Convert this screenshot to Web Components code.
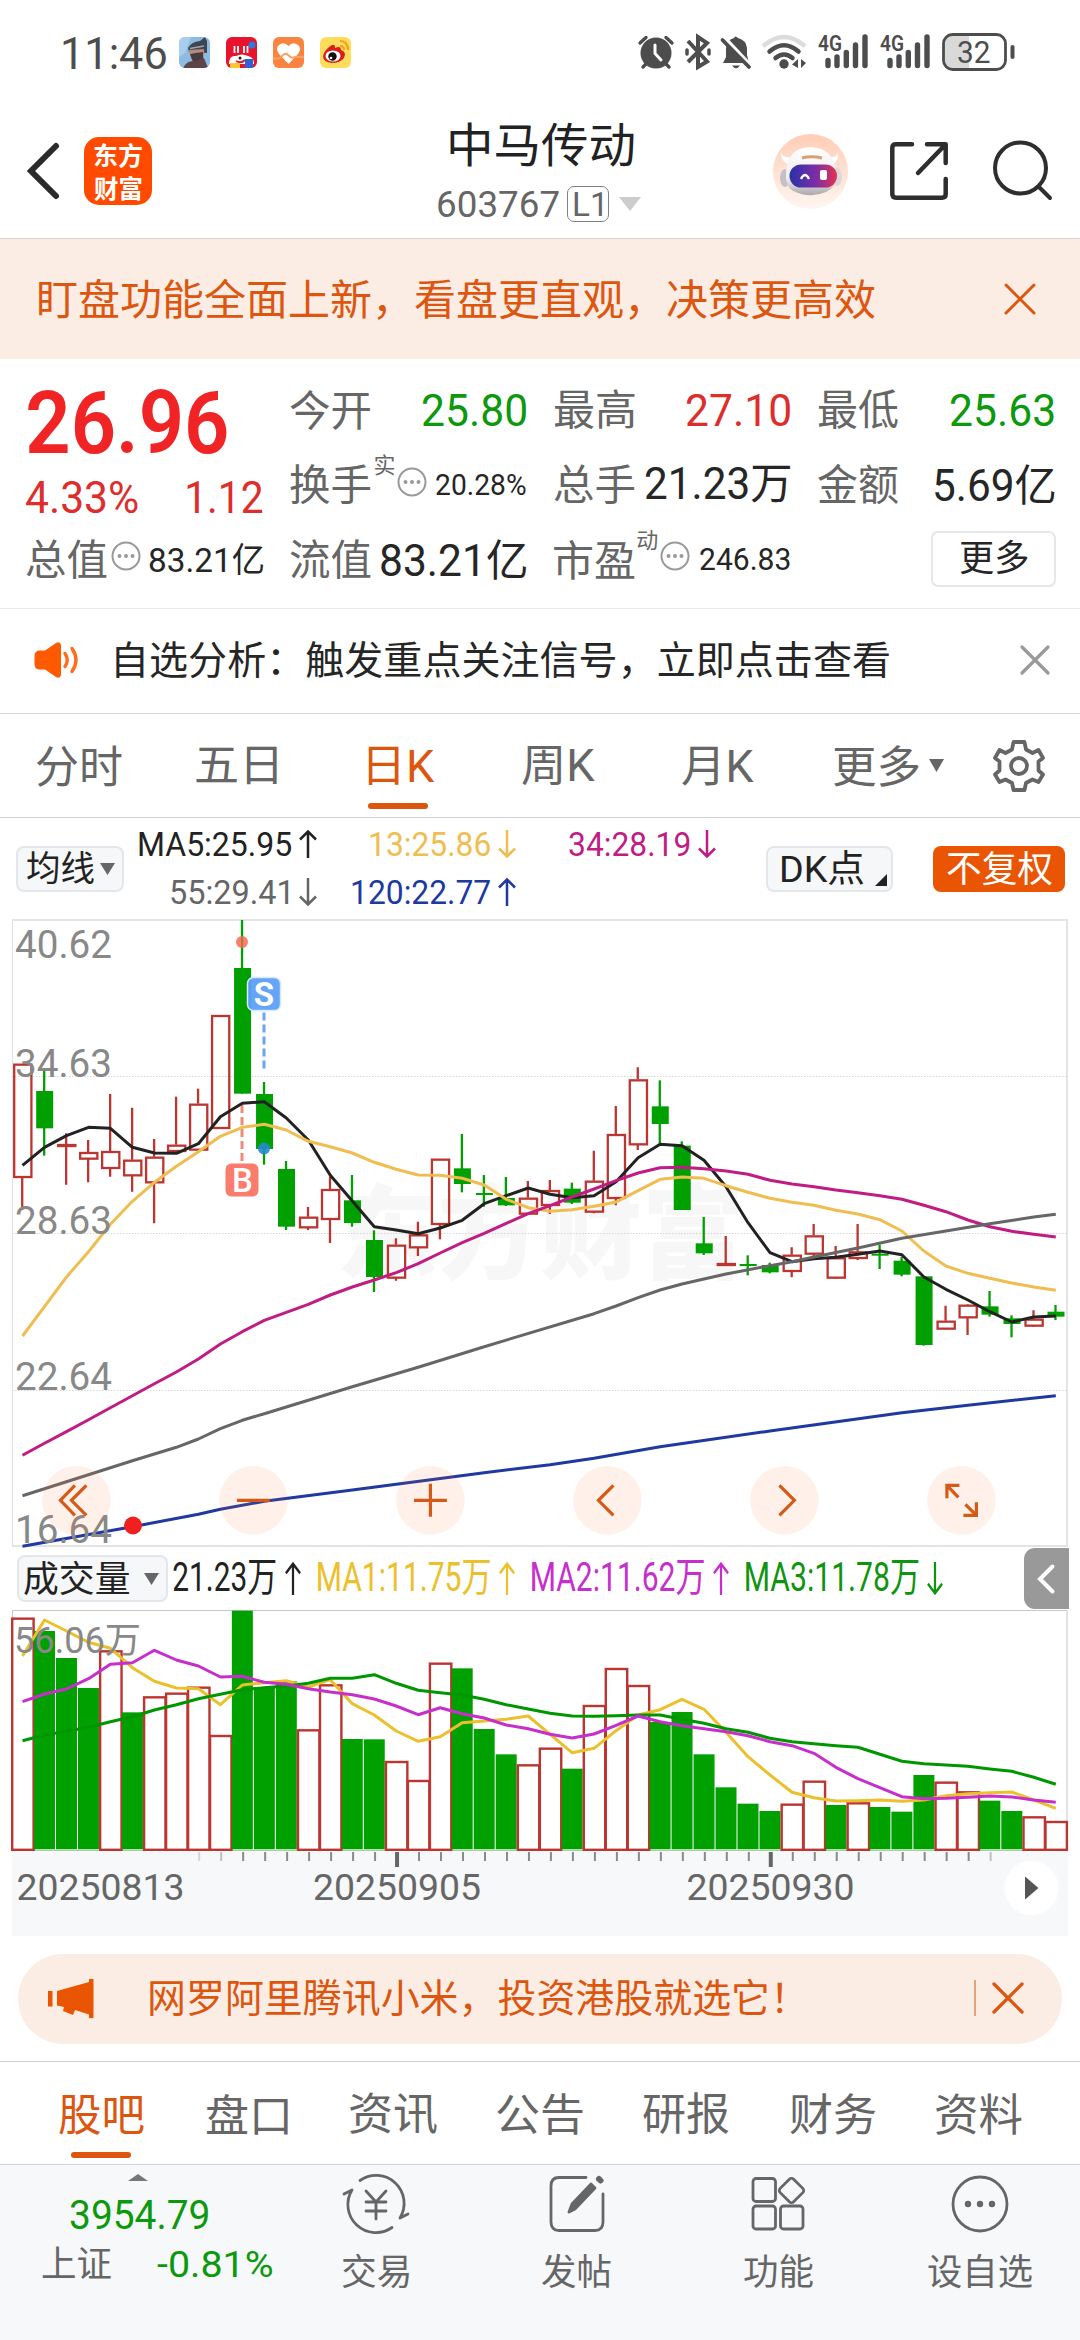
<!DOCTYPE html>
<html lang="zh-CN">
<head>
<meta charset="utf-8">
<title>中马传动 603767</title>
<style>
html,body{margin:0;padding:0;background:#fff}
body{width:1080px;height:2340px;overflow:hidden;font-family:Roboto,"Noto Sans CJK SC",sans-serif}
</style>
</head>
<body>
<stock-page></stock-page>
<script>
const FONT = 'Roboto,"Noto Sans CJK SC",sans-serif';
const ctx = document.createElement('canvas').getContext('2d');

/* Text whose box is its ink: w = ink width, s = font size, c = colour, b = weight, ml = left margin, dy = vertical nudge */
customElements.define('fit-text', class extends HTMLElement {
  connectedCallback() {
    if (this.shadowRoot) return;
    const a = (n, d) => this.hasAttribute(n) ? this.getAttribute(n) : d;
    const s = +a('s', 40), b = a('b', '400'), t = this.textContent;
    ctx.font = `${b} ${s}px ${FONT}`;
    const m = ctx.measureText(t);
    const ink = m.actualBoundingBoxLeft + m.actualBoundingBoxRight;
    const w = +a('w', ink), k = w / ink;
    const asc = m.actualBoundingBoxAscent, h = asc + m.actualBoundingBoxDescent;
    const base = h / 2 + (m.fontBoundingBoxAscent - m.fontBoundingBoxDescent) / 2;
    const dx = m.actualBoundingBoxLeft * k, dy = asc - base + +a('dy', 0);
    this.attachShadow({mode: 'open'}).innerHTML = `<style>
      :host{display:block;flex:none;width:${w}px;height:${h}px;margin-left:${a('ml', 0)};color:${a('c', 'inherit')}}
      span{display:block;width:max-content;white-space:nowrap;font:${b} ${s}px/${h}px ${FONT};transform-origin:0 50%;transform:translate(${dx}px,${dy}px) scaleX(${k})}
    </style><span><slot></slot></span>`;
  }
});

function define(name, css, html) {
  const tpl = document.createElement('template');
  tpl.innerHTML = `<style>:host{display:block;box-sizing:border-box}*{box-sizing:border-box}svg{display:block;flex:none;overflow:visible}.r{display:flex;align-items:center}${css}</style>${html}`;
  customElements.define(name, class extends HTMLElement {
    constructor() { super(); this.attachShadow({mode: 'open'}).append(tpl.content.cloneNode(true)); }
  });
}

const signal = ml => `<svg width="50" height="36" viewBox="0 0 50 36" style="margin-left:${ml}px">
  <g stroke="#4d4d4d" stroke-width="5.4" stroke-linecap="round"><path d="M10 26.500V31.500M19 23V31.500M28.300 18.500V31.500M37.500 11V31.500M47 3V31.500"/></g>
  <text x="0" y="17" font-family="Roboto" font-weight="600" font-size="22.500" textLength="24" lengthAdjust="spacingAndGlyphs" fill="#4d4d4d">4G</text></svg>`;

define('status-bar', `:host{height:104px}.r{height:104px;padding-left:63px}`, `<div class="r">
  <fit-text s="44" w="103" c="#4d4d4d" dy="1">11:46</fit-text>
  <svg width="31" height="31" viewBox="0 0 31 31" style="margin-left:13px"><defs><clipPath id="a"><rect width="31" height="31" rx="6"/></clipPath></defs><g clip-path="url(#a)"><rect width="31" height="31" fill="#8dbbe2"/><path d="M0 0H12L6 16L0 20z" fill="#a9cdec"/><path d="M9 11Q12 5 21 4L26 0 28 4 28 16 10 15z" fill="#3e4751"/><path d="M10 13L25 12 25 20 20 25 12 22z" fill="#b98a78"/><path d="M11 17L17 16L24 15 24 24 14 25z" fill="#443c40"/><path d="M4 31Q8 23 16 24L25 21 29 31z" fill="#5c4448"/><path d="M11 11.500L25 9" stroke="#9aa8b2" stroke-width="1.600"/></g></svg>
  <svg width="31" height="31" viewBox="0 0 31 31" style="margin-left:16px"><defs><clipPath id="b"><rect width="31" height="31" rx="6"/></clipPath></defs><g clip-path="url(#b)"><rect width="31" height="31" fill="#e8142d"/><circle cx="26" cy="8" r="3.500" fill="#2c7be0"/><path d="M3 27Q3 18 10 19Q16 16 22 19Q28 20 28 27z" fill="#fff"/><path d="M10 24Q15 27 19 23" stroke="#e8142d" stroke-width="2" fill="none"/><circle cx="14" cy="21" r="1.500" fill="#222"/><rect x="19" y="22" width="8" height="9" fill="#2c62d8"/><rect x="4" y="26" width="10" height="5" fill="#ffc531"/><path d="M8.500 9V16M12 9V16M18 9V16M21.500 9V16" stroke="#fff" stroke-width="1.800"/></g></svg>
  <svg width="31" height="31" viewBox="0 0 31 31" style="margin-left:16px"><rect width="31" height="31" rx="6" fill="#f98440"/><path d="M15.500 27L6 17Q2 11 6 8Q11 4 15.500 9Q20 4 25 8Q29 11 25 17z" fill="#fff"/><path d="M0 21Q4 23 8 20Q12 15 15 18Q19 22 22 20L31 20" stroke="#f8a164" stroke-width="2" fill="none"/></svg>
  <svg width="31" height="31" viewBox="0 0 31 31" style="margin-left:16px"><rect width="31" height="31" rx="6" fill="#ffdc5c"/><path d="M3 19Q5 12 12 8Q15 7 15 11Q21 8 21 13Q27 15 24 21Q20 26 12 26Q3 25 3 19z" fill="#d81f1c"/><ellipse cx="13" cy="19" rx="7.500" ry="5.500" fill="#fff"/><circle cx="12.500" cy="19.500" r="4.200" fill="#15100e"/><circle cx="11" cy="21" r="1.300" fill="#fff"/><path d="M20 4Q28 4 28 13M20 9Q24 9 24 13" stroke="#f3a21f" stroke-width="2.200" fill="none"/></svg>
  <svg width="36" height="34" viewBox="0 0 36 34" style="margin-left:287px"><g fill="none" stroke="#4d4d4d" stroke-width="3.400" stroke-linecap="round"><path d="M2 8L8 2.500M34 8L28 2.500M5 32L9 28M31 32L27 28"/></g><circle cx="18" cy="18" r="15.500" fill="#4d4d4d"/><path d="M17 10V18.500L23 25" fill="none" stroke="#fff" stroke-width="3" stroke-linecap="round"/></svg>
  <svg width="26" height="34" viewBox="0 0 26 34" style="margin-left:11px"><path d="M3 6L22 26.500L13 32V2L22 8L3 27" fill="none" stroke="#4d4d4d" stroke-width="4"/><path d="M2 15v4M24 15v4" stroke="#4d4d4d" stroke-width="3.500" stroke-linecap="round"/></svg>
  <svg width="30" height="34" viewBox="0 0 30 34" style="margin-left:10px"><path d="M2 28L5 22V14Q5 5 13 3Q14 0 17 3Q25 5 26 13V20L28 28z" fill="#4d4d4d"/><path d="M11 30.500H19Q15 36 11 30.500z" fill="#4d4d4d"/><path d="M3 2L30 31" stroke="#fff" stroke-width="4"/><path d="M1.500 5L28 32" stroke="#4d4d4d" stroke-width="3.800" stroke-linecap="round"/></svg>
  <svg width="44" height="34" viewBox="0 0 44 34" style="margin-left:11px"><g fill="none" stroke-width="4.500" stroke-linecap="round"><path d="M2.500 10Q22-6 41.500 10" stroke="#dcdcdc"/><path d="M7.500 16.500Q22 4 36.500 16.500" stroke="#4d4d4d"/><path d="M13.500 23Q22 16 30.500 23" stroke="#4d4d4d"/></g><circle cx="22" cy="29" r="4.700" fill="#4d4d4d"/><path d="M36 24V33L30 29.500zM39 24L44 28L39 33z" fill="#4d4d4d"/></svg>
  ${signal(12)}${signal(12)}
  <svg width="73" height="38" viewBox="0 0 73 38" style="margin-left:12px"><path d="M9 1.500H27V36.500H9Q2 36 2 28V10Q2 2 9 1.500z" fill="#d9d9d9"/><rect x="1.500" y="1.500" width="62" height="35" rx="9" fill="none" stroke="#4d4d4d" stroke-width="2.800"/><path d="M70.500 14V24" stroke="#4d4d4d" stroke-width="4" stroke-linecap="round"/><text x="15" y="30" font-family="Roboto" font-size="32" textLength="33.500" lengthAdjust="spacingAndGlyphs" fill="#4d4d4d">32</text></svg>
</div>`);

define('nav-bar', `:host{height:135px;border-bottom:1px solid #d2d2d2}.r{height:134px}
.logo{width:68px;height:68px;border-radius:15px;background:#ff4a00;margin-left:25px;color:#fff;display:flex;flex-direction:column;align-items:center;justify-content:center;gap:6px}
.title{margin-left:286px;width:206px;display:flex;flex-direction:column;align-items:flex-start;padding-top:2px}
.sub{display:flex;align-items:center;height:36px;margin-top:19px}
.lv{width:42px;height:36px;border:1.500px solid #808080;border-radius:7px;margin-left:8px;display:flex;align-items:center;justify-content:center}`, `<div class="r">
  <svg width="32" height="56" viewBox="0 0 32 56" style="margin-left:27px"><path d="M29 3L4 28L29 53" fill="none" stroke="#2b2b2b" stroke-width="6" stroke-linecap="round"/></svg>
  <div class="logo"><fit-text s="25" w="48" b="700">东方</fit-text><fit-text s="25" w="48" b="700">财富</fit-text></div>
  <div class="title"><fit-text s="47" w="184" ml="12px" c="#222">中马传动</fit-text>
    <div class="sub"><fit-text s="37.500" w="121" c="#666">603767</fit-text><div class="lv"><fit-text s="33" w="28" c="#666">L1</fit-text></div>
    <svg width="22" height="14" viewBox="0 0 22 14" style="margin-left:10px"><path d="M0 0H22L11 14z" fill="#ccc"/></svg></div></div>
  <svg width="75" height="75" viewBox="0 0 75 75" style="margin-left:129px"><defs><linearGradient id="bg" x2="0" y2="1"><stop stop-color="#ffcdb5"/><stop offset="1" stop-color="#fff6f1"/></linearGradient><linearGradient id="vz"><stop stop-color="#2931a5"/><stop offset=".55" stop-color="#7a2ea8"/><stop offset="1" stop-color="#e5324e"/></linearGradient><linearGradient id="hd" x2="0" y2="1"><stop stop-color="#fff"/><stop offset=".65" stop-color="#f0edf0"/><stop offset="1" stop-color="#aaa7ad"/></linearGradient></defs>
    <circle cx="37.500" cy="37.500" r="37.500" fill="url(#bg)"/><path d="M8 17Q8 24 17 23L15 30Q7 27 8 17zM64 17Q65 24 57 23L60 30Q67 26 64 17z" fill="#fff"/><ellipse cx="12" cy="44" rx="5" ry="9" fill="#c4c2c8"/><ellipse cx="64" cy="43" rx="5" ry="9" fill="#ddd8dc"/><path d="M13 40Q14 13 38 13Q61 14 63 39Q64 53 53 58Q37 65 20 57Q12 52 13 40z" fill="url(#hd)"/><path d="M29 24Q38 21.500 49 24" stroke="#d9a06f" stroke-width="3" fill="none"/><rect x="16.500" y="30.500" width="47.500" height="23" rx="11.500" fill="url(#vz)"/><path d="M28 45Q32 37 36 45" stroke="#fff" stroke-width="2.300" fill="none"/><rect x="47" y="36" width="7" height="10" rx="2" fill="#fff"/></svg>
  <svg width="58" height="58" viewBox="0 0 58 58" style="margin-left:42px"><g fill="none" stroke="#2e2e2e" stroke-width="4.500" stroke-linecap="round" stroke-linejoin="round"><path d="M22 2.300H6Q2.300 2.300 2.300 6V51.700Q2.300 55.700 6 55.700H52Q55.700 55.700 55.700 52V37"/><path d="M37 2.300H55.700V21M55 3L28 31"/></g></svg>
  <svg width="60" height="60" viewBox="0 0 60 60" style="margin-left:45px"><g fill="none" stroke="#2e2e2e" stroke-width="4" stroke-linecap="round"><circle cx="27.500" cy="27" r="25.500"/><path d="M46 46L57 57"/></g></svg>
</div>`);

define('alert-banner', `:host{height:120px;background:#fcede4}.r{height:120px;padding-left:39px}`, `<div class="r">
  <fit-text s="42" w="836" c="#dc5610">盯盘功能全面上新，看盘更直观，决策更高效</fit-text>
  <svg width="32" height="32" viewBox="0 0 32 32" style="margin-left:129px"><path d="M2 2L30 30M30 2L2 30" stroke="#dc5610" stroke-width="3" stroke-linecap="round"/></svg></div>`);

const dots = (ml, c='') => `<svg width="30" height="30" viewBox="0 0 30 30" style="margin-left:${ml}px;${c}"><circle cx="15" cy="15" r="13.500" fill="none" stroke="#999" stroke-width="2"/><g fill="#999"><circle cx="8.500" cy="15" r="2"/><circle cx="15" cy="15" r="2"/><circle cx="21.500" cy="15" r="2"/></g></svg>`;
const cell = (label, mid, value) => `<div class="r cell"><fit-text s="41.500" w="80.500" c="#666">${label}</fit-text>${mid}${value}</div>`;
const val = (t, s, w, c='#262626', dy=0) => `<fit-text ml="auto" s="${s}" w="${w}" c="${c}" dy="${dy}">${t}</fit-text>`;
define('quote-panel', `:host{height:250px;border-bottom:1px solid #ebebeb}
.g{display:grid;grid-template-columns:repeat(4,236.500px);column-gap:27.400px;grid-auto-rows:75px;padding:12.500px 0 0 26px}
.cell{height:75px}.between{justify-content:space-between}
.more{width:125px;height:56px;margin-left:auto;border:2px solid #e6e6e9;border-radius:7px;display:flex;align-items:center;justify-content:center;position:relative;right:-2px}`, `<div class="g">
  <div class="r cell"><fit-text s="87" w="199" ml="1.500px" b="600" c="#f02424" dy="12">26.96</fit-text></div>
  ${cell('今开','',val('25.80',45,103,'#0d990d',1))}${cell('最高','',val('27.10',45,103,'#dd2d2d',1))}${cell('最低','',val('25.63',45,103,'#0d990d',1))}
  <div class="r cell between"><fit-text s="44" w="112" c="#dd2d2d" dy="13">4.33%</fit-text><fit-text s="44" w="76" c="#dd2d2d" dy="13">1.12</fit-text></div>
  ${cell('换手','<fit-text s="22" w="20" ml="4px" c="#666" dy="-19">实</fit-text>'+dots(3,'margin-top:-5px'),val('20.28%',29.5,90,'#262626',0))}
  ${cell('总手','',val('21.23万',43.5,144))}${cell('金额','',val('5.69亿',43.5,119.5))}
  ${cell('总值',dots(4,'margin-top:-7px'),val('83.21亿',34,114))}${cell('流值','',val('83.21亿',43.5,145))}
  ${cell('市盈','<fit-text s="22" w="20" ml="3px" c="#666" dy="-19">动</fit-text>'+dots(3,'margin-top:-7px'),val('246.83',31,90,'#262626',0))}
  <div class="r cell"><div class="more"><fit-text s="36" w="67.500" c="#262626" dy="-2">更多</fit-text></div></div>
</div>`);

define('signal-notice', `:host{height:105px;border-bottom:1px solid #d6d6d6}.r{height:102px;padding-left:34px}`, `<div class="r">
  <svg width="44" height="36" viewBox="0 0 44 36"><path d="M6 8.500H11L22 1Q26-1 27 3V33Q26 37 22 35L11 27.500H6Q.5 27.500.5 22V14Q.5 8.500 6 8.500z" fill="#ff5a00"/><g fill="none" stroke="#ff6c1c" stroke-width="3.400" stroke-linecap="round"><path d="M31 11.500Q35.500 18 31 24.500M38 6.500Q46 18 38 29.500"/></g></svg>
  <fit-text s="39" w="773" ml="38px" c="#262626" dy="-1">自选分析：触发重点关注信号，立即点击查看</fit-text>
  <svg width="30" height="30" viewBox="0 0 30 30" style="margin-left:131px"><path d="M2 2L28 28M28 2L2 28" stroke="#999" stroke-width="3.200" stroke-linecap="round"/></svg></div>`);

define('period-tabs', `:host{height:104px;border-bottom:1px solid #d2d2d2;color:#666}.r{height:103px;padding-left:36px}
.on{align-self:stretch;display:flex;flex-direction:column;align-items:flex-start;justify-content:flex-end;color:#dc5610;margin-left:91px}
.on i{width:60px;height:6px;border-radius:3px;background:#dc5610;margin:17px 0 8px}`, `<div class="r">
  <fit-text s="44" w="86">分时</fit-text>
  <fit-text s="44" w="81" ml="74px">五日</fit-text>
  <div class="on"><fit-text s="45" w="67">日K</fit-text><i></i></div>
  <fit-text s="44" w="73" ml="87px">周K</fit-text>
  <fit-text s="44" w="72" ml="87px">月K</fit-text>
  <fit-text s="44" w="85" ml="80px">更多</fit-text>
  <svg width="15" height="13" viewBox="0 0 15 13" style="margin-left:10px"><path d="M0 0H15L7.500 13z" fill="#666"/></svg>
  <svg width="52" height="52" viewBox="-26 -26 52 52" style="margin-left:49px"><path d="M-5.500-24H5.500L7-16.500L13.500-13L19.500-16L24-8L19.500-4.500V4.500L24 8.500L19.500 16L13.500 13.500L7 17L5.500 24H-5.500L-7 17L-13.500 13.500L-19.500 16L-24 8.500L-19.500 4.500V-4.500L-24-8L-19.500-16L-13.500-13L-7-16.500z" fill="none" stroke="#666" stroke-width="3.800" stroke-linejoin="round"/><circle r="8" fill="none" stroke="#666" stroke-width="3.800"/></svg></div>`);

const arrow = (d, ml, h=28, c='', w=18) => `<svg width="${w}" height="${h}" viewBox="0 0 18 28" preserveAspectRatio="none" style="margin-left:${ml}px;${c}"><path d="${d==='up'?'M9 28V1.500M1 9.500L9 1.500L17 9.500':'M9 0V26.500M1 18.500L9 26.500L17 18.500'}" fill="none" stroke="currentColor" stroke-width="2.500"/></svg>`;
define('ma-legend', `:host{height:101px}.row{display:flex;align-items:center;height:101px;padding-left:16px}
.btn{height:46px;border:2px solid #e3e6ea;border-radius:8px;background:#f6f7f9;display:flex;align-items:center;color:#222;flex:none}
.lines{width:580px;margin-left:15px;display:flex;flex-direction:column;margin-top:-2px}.lines .r{height:48px}`, `<div class="row">
  <div class="btn" style="width:108px;padding-left:9px"><fit-text s="35" w="67" dy="-1">均线</fit-text><svg width="15" height="12" viewBox="0 0 15 12" style="margin-left:6px"><path d="M0 0H15L7.500 12z" fill="#666"/></svg></div>
  <div class="lines">
    <div class="r"><fit-text s="32.500" w="152" c="#222">MA5:25.95</fit-text><span style="color:#222">${arrow('up',8)}</span><fit-text s="32.500" w="120" ml="53px" c="#f0bd50">13:25.86</fit-text><span style="color:#f0bd50">${arrow('down',8)}</span><fit-text s="32.500" w="121" ml="53px" c="#c01c83">34:28.19</fit-text><span style="color:#c01c83">${arrow('down',8)}</span></div>
    <div class="r"><fit-text s="32.500" w="117.500" ml="32px" c="#666">55:29.41</fit-text><span style="color:#666">${arrow('down',10.5)}</span><fit-text s="32.500" w="138" ml="35px" c="#2039a0">120:22.77</fit-text><span style="color:#2039a0">${arrow('up',8)}</span></div>
  </div>
  <div class="btn" style="width:127px;margin-left:47px;padding-left:14px"><fit-text s="37" w="82" dy="-1">DK点</fit-text><svg width="12" height="12" viewBox="0 0 12 12" style="margin:22px 0 0 11px"><path d="M12 0V12H0z" fill="#222"/></svg></div>
  <div class="btn" style="width:132px;margin-left:39.500px;background:#ea5504;border:0;color:#fff;padding-left:14px"><fit-text s="36" w="105" dy="-1">不复权</fit-text></div>
</div>`);

/* ---- charts: 48 sessions, x in page pixels, y samples in thirds of a pixel below each chart's origin ---- */
const X = i => 22.5 + 21.985 * i;
const path = (pts, y) => 'M' + pts.map(p => `${X(p[0]).toFixed(1)} ${y(p[1]).toFixed(1)}`).join('L');
const seq = s => s.split(' ').map((v, i) => [i, +v]);
const pairs = s => s.split(' ').map(p => p.split(':').map(Number));

const candles = `R71,71,412,510 G90,153,265,347 R280,312,316,434 R300,336,357,427 R162,333,385,410 R203,359,407,455 R297,350,428,550 R170,314,334,334 R146,191,330,330 R-75,-75,265,265 G-360,-216,161,161 G126,162,327,374 G363,387,560,570 R501,530,563,570 R410,447,538,609 G405,481,549,560 G571,600,711,756 R595,614,714,722 R545,583,623,648 R356,356,553,598 G282,385,432,457 G405,459,465,500 G411,474,496,498 R423,473,522,522 R420,450,496,522 G428,446,488,492 R332,422,516,520 R198,282,475,496 R82,118,314,330 G121,199,252,312 G304,317,510,510 G531,610,640,645 R588,669,671,671 G646,672,678,706 G668,675,697,700 R622,644,694,712 R552,586,642,650 R618,652,714,716 R552,634,655,660 G614,641,647,687 G650,662,704,709 G708,709,915,917 R797,842,867,868 R793,794,833,885 G753,799,824,830 G826,835,852,892 R811,836,858,860 G795,815,830,840`.split(' ').map(s => [s[0], ...s.slice(1).split(',').map(Number)]);
const Y = v => 1040 + v / 3;
const RED = '#bb3531', GREEN = '#00a000';
const candleSvg = candles.map(([k, hi, t, b, lo], i) => {
  const x = X(i);
  if (k === 'G') return `<path d="M${x - .3} ${Y(hi)}V${Y(lo)}" stroke="${GREEN}" stroke-width="2.300"/><rect x="${x - 8.3}" y="${Y(t)}" width="17" height="${(b - t) / 3}" fill="${GREEN}"/>`;
  return `<path d="M${x - .3} ${Y(hi)}V${Y(t)}M${x - .3} ${Y(b)}V${Y(lo)}" stroke="${RED}" stroke-width="2.300"/><rect x="${x - 8.3}" y="${Y(t + 3)}" width="17.200" height="${Math.max(1, (b - t - 4) / 3)}" fill="none" stroke="${RED}" stroke-width="2.300"/>`;
}).join('');
const lines = [
  ['#222', seq('376 322 287 262 265 322 339 340 311 230 190 185 234 300 406 483 560 570 581 564 541 491 467 444 463 473 467 425 353 313 317 361 440 548 638 665 656 652 643 633 644 711 748 780 815 846 831 828')],
  ['#f0bd50', seq('888 800 711 635 553 484 427 379 335 289 262 253 270 304 320 339 367 388 405 406 415 435 478 503 514 509 499 486 452 418 411 415 437 457 475 487 496 511 522 539 573 633 678 700 715 729 741 751')],
  ['#c01c83', seq('1246 1210 1175 1139 1103 1067 1031 996 957 912 875 841 817 793 765 741 720 698 671 639 608 580 550 521 497 471 447 422 399 383 382 386 393 403 421 432 440 450 458 467 478 496 515 540 560 574 583 591')],
  ['#666', pairs('0:1367 5:1262 7:1222 8:1197 9:1166 10:1141 11:1121 15:1040 18:982 21:920 26:821 27:798 28:773 29:750 30:732 32:702 34:677 35:665 36:651 38:624 40:595 44:551 46:531 47:523')],
  ['#2039a0', pairs('0:1519 5:1460 8:1423 9:1408 11:1384 15:1350 21:1298 24:1274 26:1255 29:1220 34:1173 40:1118 43:1096 47:1067')],
].map(([c, p]) => `<path d="${path(p, Y)}" fill="none" stroke="${c}" stroke-width="3" stroke-linejoin="round"/>`).join('');
const label = (t, y) => `<text x="15" y="${y}" font-size="39.500" fill="#888" textLength="97" lengthAdjust="spacingAndGlyphs">${t}</text>`;
const knobs = ['M-1.500-15L-16 0L-1.500 15M10-15L-5 0L10 15', 'M-16.500 0H16.500', 'M-16.500 0H16.500M0-16.500V16.500', 'M6-15L-9 0L6 15', 'M-5-15L10 0L-5 15', 'M-2-15H-14.500V-2M-14.500-15L-3-3M2 15H15V2M15 15L4 4'];

define('price-chart', `:host{height:629px}text{font-family:Roboto,"Noto Sans CJK SC",sans-serif}`, `<svg width="1080" height="629" viewBox="0 919 1080 629">
  <text x="336" y="1271" font-size="102" font-weight="900" fill="#f7f7f7" textLength="408">东方财富</text>
  <path d="M12.500 920V1546" stroke="#e2e2e2" stroke-width="1.200"/><path d="M12 920H1067V1546H12" fill="none" stroke="#e4e4e4" stroke-width="2"/>
  <path d="M12 1076.500H1067M12 1233.500H1067M12 1390.500H1067" stroke="#d6d6d6" stroke-width="1" stroke-dasharray="1.500 1.500"/>
  ${candleSvg}
  <path d="M242 1105V1162" stroke="#f08a78" stroke-width="3" stroke-dasharray="8 4"/><path d="M264 1012.500V1070" stroke="#6aa5ee" stroke-width="3" stroke-dasharray="8 4"/>
  <circle cx="242" cy="942" r="6" fill="#f5664b" opacity=".82"/><circle cx="264" cy="1148.500" r="6" fill="#2688cf" opacity=".9"/>
  ${lines}
  <rect x="247.500" y="977.500" width="33" height="33" rx="6" fill="#5c9ff9" fill-opacity=".95" stroke="#d8e8ff" stroke-width="1.500"/><text x="264" y="1006" font-size="33" font-weight="700" fill="#fff" text-anchor="middle">S</text>
  <rect x="225.500" y="1163.500" width="33" height="33" rx="6" fill="#fa7c6c"/><text x="242.300" y="1191.500" font-size="33" font-weight="500" fill="#fff" text-anchor="middle">B</text>
  ${label('40.62', 957.5)}${label('34.63', 1077)}${label('28.63', 1234)}${label('22.64', 1389.5)}${label('16.64', 1542.5)}
  <circle cx="133" cy="1525.500" r="9" fill="#f02020"/>
  ${knobs.map((d, i) => `<g transform="translate(${76.4 + 177 * i} 1500.300)"><circle r="34.300" fill="#ff7832" fill-opacity=".1"/><path d="${d}" fill="none" stroke="#d55a17" stroke-width="3.200"/></g>`).join('')}
</svg>`);

define('volume-legend', `:host{height:61px}.r{height:61px;padding-left:16.500px}
.btn{width:151px;height:47px;border:2px solid #e3e6ea;border-radius:8px;background:#f6f7f9;display:flex;align-items:center;padding-left:5px;flex:none}
.fold{width:45px;height:61px;border-radius:11px 0 0 11px;background:#999;display:flex;align-items:center;justify-content:center;margin-left:80.500px}`, `<div class="r">
  <div class="btn"><fit-text s="36" w="105.500" c="#222" dy="-1">成交量</fit-text><svg width="15" height="12" viewBox="0 0 15 12" style="margin-left:15px"><path d="M0 0H15L7.500 12z" fill="#666"/></svg></div>
  <fit-text s="40" w="102.500" ml="5.500px" c="#222" dy="-1">21.23万</fit-text><span style="color:#222">${arrow('up',9,33,'',16)}</span>
  <fit-text s="40" w="172" ml="17px" c="#ebc02b" dy="-1">MA1:11.75万</fit-text><span style="color:#ebc02b">${arrow('up',9,33,'',16)}</span>
  <fit-text s="40" w="172" ml="17px" c="#c62fcb" dy="-1">MA2:11.62万</fit-text><span style="color:#c62fcb">${arrow('up',9,33,'',16)}</span>
  <fit-text s="40" w="172.500" ml="17px" c="#109410" dy="-1">MA3:11.78万</fit-text><span style="color:#109410">${arrow('down',9,33,'',16)}</span>
  <div class="fold"><svg width="18" height="30" viewBox="0 0 18 30"><path d="M15.500 2.500L3 15L15.500 27.500" fill="none" stroke="#fff" stroke-width="4" stroke-linecap="round"/></svg></div>
</div>`);

const V = v => 1540 + v / 3;
const bars = 'R233 G273 G354 G444 R331 G517 R469 R458 R440 R585 G212 G441 G424 R568 R433 G597 G598 R663 R720 R368 G385 G567 G643 R673 R623 G686 R495 R384 R435 G546 G516 G643 G742 G791 G813 R791 R722 G795 R787 G801 G815 G705 R725 R754 G782 G813 R829 R843'.split(' ').map((s, i) => {
  const x = X(i), y = V(+s.slice(1));
  return s[0] === 'G' ? `<rect x="${x - 10.5}" y="${y}" width="21" height="${1849.3 - y}" fill="${GREEN}"/>`
    : `<rect x="${x - 10.3}" y="${y + 1}" width="21.400" height="${1848.8 - y}" fill="#fff" stroke="${RED}" stroke-width="2.400"/>`;
}).join('');
const volLines = [
  ['#ebc02b', '348 240 273 307 325 383 424 444 446 494 435 428 422 441 419 491 525 573 604 590 548 543 538 528 583 638 625 572 525 509 478 508 577 650 705 757 773 783 782 780 784 780 767 761 758 756 780 805'],
  ['#009600', '602 585 574 562 545 530 510 494 476 463 449 443 438 430 415 415 404 430 451 458 465 478 494 507 520 528 529 527 525 525 538 550 566 577 595 605 611 617 622 643 664 671 675 679 687 694 712 733'],
  ['#c62fcb', '485 462 447 416 373 368 331 360 378 411 409 427 433 446 456 464 477 498 524 503 521 534 555 566 583 594 582 556 528 545 557 566 575 587 605 617 640 682 716 743 770 776 775 772 768 771 780 787'],
].map(([c, s]) => `<path d="${path(seq(s), V)}" fill="none" stroke="${c}" stroke-width="3" stroke-linejoin="round"/>`).join('');
const ticks = Array.from({length: 37}, (_, k) => {
  const i = k + 8, big = i === 17 || i === 34, o = i === 8 ? .3 : i === 9 || i === 44 ? .5 : 1;
  return `<path d="M${X(i) + .8} 1852V${big ? 1867 : 1861}" stroke="${big ? '#666' : '#8a8a8a'}" stroke-width="${big ? 4 : 2}" opacity="${o}"/>`;
}).join('');
const date = (t, x) => `<text x="${x}" y="1899.500" font-size="37.500" fill="#666" textLength="168" lengthAdjust="spacingAndGlyphs">${t}</text>`;
define('volume-chart', `:host{height:327px}text{font-family:Roboto,"Noto Sans CJK SC",sans-serif}`, `<svg width="1080" height="327" viewBox="0 1609 1080 327">
  <rect x="12" y="1851" width="1056" height="85" fill="#f7f8fa"/>
  <path d="M12.500 1850V1610.500H1067V1850" fill="none" stroke="#c8c8c8" stroke-width="1"/>
  <path d="M12 1850.500H1067" stroke="#a6cfa6"/>
  ${bars}${volLines}
  <text x="14" y="1653" font-size="36" fill="#888" textLength="127" lengthAdjust="spacingAndGlyphs">56.06万</text>
  ${ticks}${date('20250813', 16.5)}${date('20250905', 313)}${date('20250930', 686.5)}
  <circle cx="1031.500" cy="1888" r="27" fill="#fff"/><path d="M1025 1876.500L1038.500 1888L1025 1899.500z" fill="#555"/>
</svg>`);

define('promo-pill', `:host{height:126px;padding:18px 18px 0;border-bottom:1px solid #d2d2d2}.r{height:90px;border-radius:45px;background:#fcede4;padding-left:29.500px;padding-bottom:2px}`, `<div class="r">
  <svg width="46" height="39" viewBox="0 0 46 39"><path d="M0 12H4.500V27.500H0zM9 12L41 3V0H45.500V39H41V35.500L27 31L25 36L15 32L16 28L9 26.500z" fill="#ea5504"/></svg>
  <fit-text s="39" w="633" ml="56.500px" c="#dc5610" dy="-1">网罗阿里腾讯小米，投资港股就选它！</fit-text>
  <svg width="2" height="36" viewBox="0 0 2 36" style="margin-left:190.500px"><path d="M1 0V36" stroke="#d98a5c" stroke-width="1.500"/></svg>
  <svg width="32" height="32" viewBox="0 0 32 32" style="margin-left:16.500px"><path d="M2 2L30 30M30 2L2 30" stroke="#dc5610" stroke-width="3.300" stroke-linecap="round"/></svg></div>`);

define('info-tabs', `:host{height:103px;border-bottom:1px solid #d2d2d2;color:#666}
.g{display:grid;grid-template-columns:repeat(7,146.300px);padding-left:28px;height:102px}
.t{display:flex;flex-direction:column;align-items:center;justify-content:flex-end;padding-bottom:6px}
.t i{width:60px;height:6px;border-radius:3px;margin-top:17px}.on{color:#dc5610}.on i{background:#dc5610}`, `<div class="g">
  <div class="t on"><fit-text s="44" w="85">股吧</fit-text><i></i></div>
  ${[['盘口',82],['资讯',87],['公告',86],['研报',86],['财务',86],['资料',86]].map(([t, w]) => `<div class="t"><fit-text s="44" w="${w}">${t}</fit-text><i></i></div>`).join('')}
</div>`);

const action = (icon, t, w) => `<div class="a"><svg width="66" height="60" viewBox="-33 -30 66 60"><g fill="none" stroke="#666" stroke-width="2.800" stroke-linecap="round" stroke-linejoin="round">${icon}</g></svg><fit-text s="36" w="${w}">${t}</fit-text></div>`;
define('bottom-bar', `:host{height:175px;background:#f7f8fa;color:#666}
.g{display:grid;grid-template-columns:275px repeat(4,201.300px)}
.idx{display:flex;flex-direction:column;padding-top:9px}.a{display:flex;flex-direction:column;align-items:center;gap:18.500px;padding-top:9px}`, `<div class="g">
  <div class="idx"><svg width="20" height="7" viewBox="0 0 20 7" style="margin-left:128px"><path d="M0 7L10 0L20 7z" fill="#777"/></svg>
    <fit-text s="40" w="138" ml="70px" c="#0d990d" dy="19">3954.79</fit-text>
    <div class="r" style="margin-top:36px"><fit-text s="36" w="69" ml="42px">上证</fit-text><fit-text s="37.500" w="115" ml="46px" c="#0d990d" dy="1">-0.81%</fit-text></div></div>
  ${action('<path d="M-16-23.500A28 28 0 0 1 24 14L32 10M16 23.500A28 28 0 0 1-24-14L-32-10"/><path d="M-10-13L0-2L10-13M0-2V15M-10-2H10M-10 7H10"/>','交易',67.5)}
  ${action('<path d="M9-26.500H-18Q-26-26.500-26-18V18Q-26 26.500-18 26.500H18Q26 26.500 26 18V-10"/><path d="M-8 8L-5 0L14-20L18-16L-2 5z" fill="#666"/><path d="M22-25L23.500-23.500" stroke-width="6"/>','发帖',69)}
  ${action('<rect x="-25" y="-25.500" width="22.500" height="23" rx="3"/><rect x="-25" y="2" width="22.500" height="23" rx="3"/><rect x="2.500" y="2" width="22.500" height="23" rx="3"/><rect x="4" y="-23" width="19" height="19" rx="3" transform="rotate(45 13.500 -13.500)"/>','功能',69)}
  ${action('<circle r="27"/><g fill="#666" stroke="none"><circle cx="-12" r="3.200"/><circle r="3.200"/><circle cx="12" r="3.200"/></g>','设自选',104)}
</div>`);

define('stock-page', `:host{width:1080px;height:2340px;background:#fff;overflow:hidden}`, `
<status-bar></status-bar><nav-bar></nav-bar><alert-banner></alert-banner><quote-panel></quote-panel><signal-notice></signal-notice>
<period-tabs></period-tabs><ma-legend></ma-legend><price-chart></price-chart><volume-legend></volume-legend><volume-chart></volume-chart>
<promo-pill></promo-pill><info-tabs></info-tabs><bottom-bar></bottom-bar>`);
</script>
</body>
</html>
